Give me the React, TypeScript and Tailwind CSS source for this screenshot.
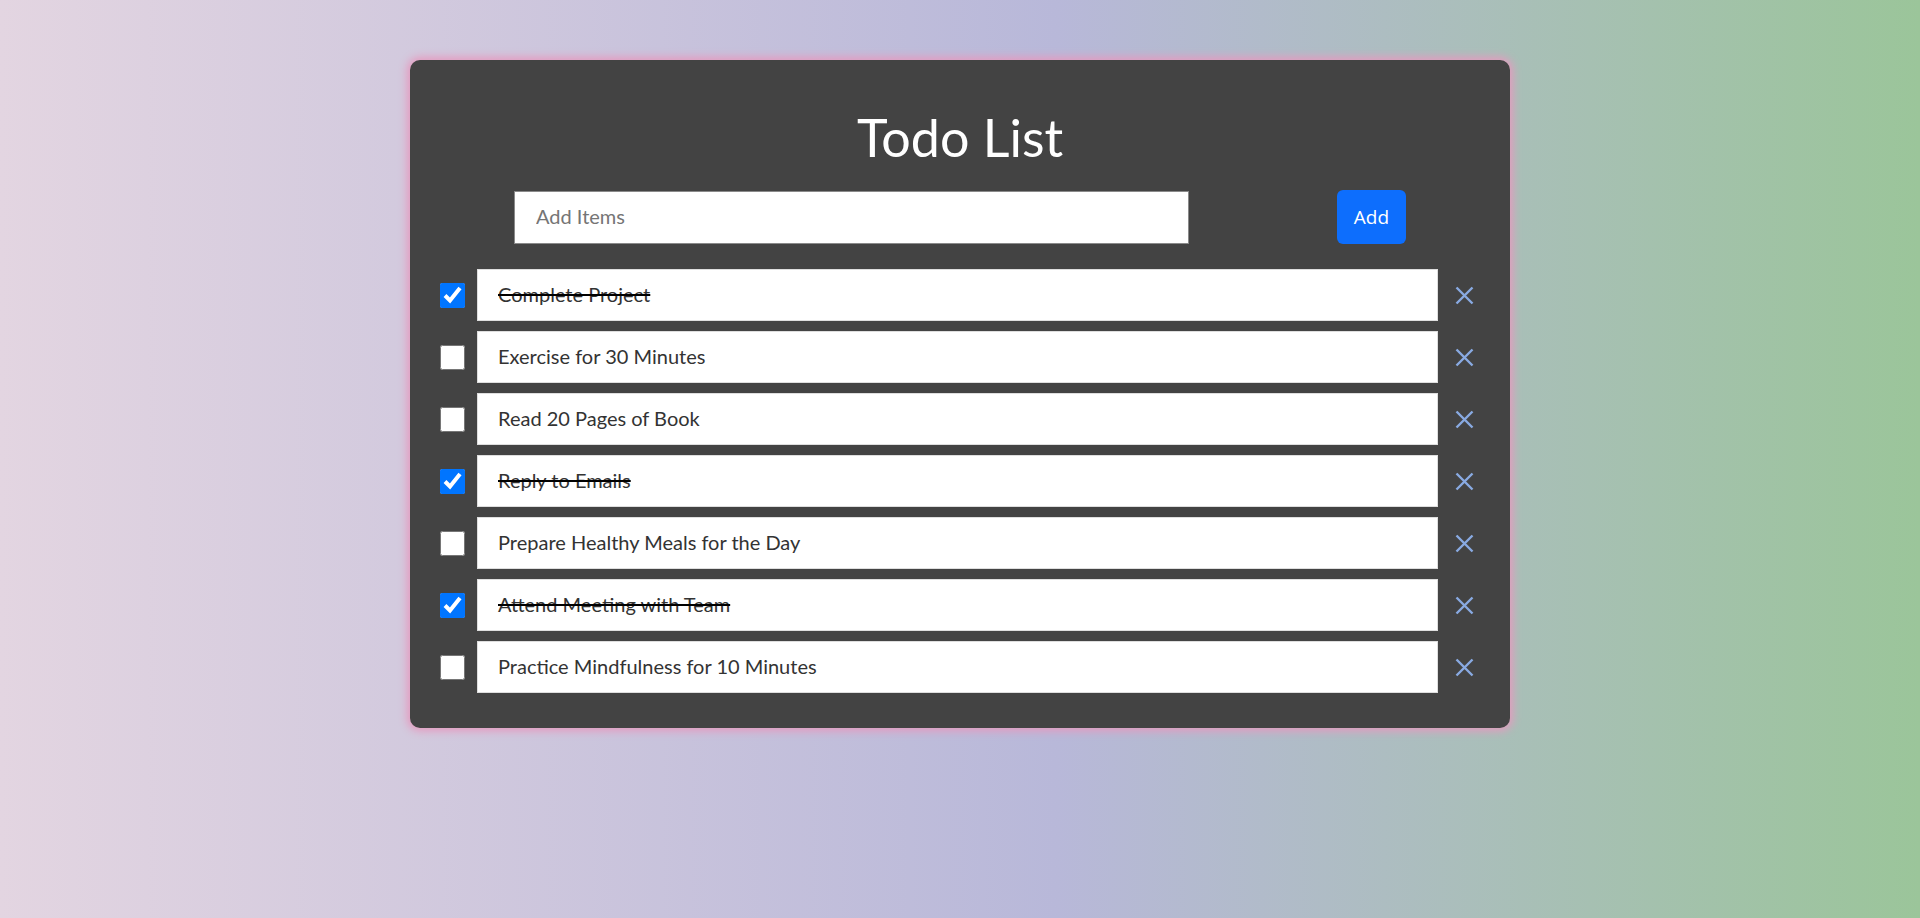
import { useState } from "react";

type Todo = { id: number; text: string; done: boolean };

const initialTodos: Todo[] = [
  { id: 1, text: "Complete Project", done: true },
  { id: 2, text: "Exercise for 30 Minutes", done: false },
  { id: 3, text: "Read 20 Pages of Book", done: false },
  { id: 4, text: "Reply to Emails", done: true },
  { id: 5, text: "Prepare Healthy Meals for the Day", done: false },
  { id: 6, text: "Attend Meeting with Team", done: true },
  { id: 7, text: "Practice Mindfulness for 10 Minutes", done: false },
];

function CloseIcon() {
  return (
    <svg width="19" height="19" viewBox="0 0 19 19" fill="none">
      <path d="M1.5 1.5 L17.5 17.5 M17.5 1.5 L1.5 17.5" stroke="#89aae2" strokeWidth="2.4" />
    </svg>
  );
}

export default function App() {
  const [todos, setTodos] = useState<Todo[]>(initialTodos);
  const [item, setItem] = useState("");

  const toggle = (id: number) =>
    setTodos(todos.map((t) => (t.id === id ? { ...t, done: !t.done } : t)));

  const remove = (id: number) => setTodos(todos.filter((t) => t.id !== id));

  const add = () => {
    if (!item.trim()) return;
    setTodos([...todos, { id: Date.now(), text: item, done: false }]);
    setItem("");
  };

  return (
    <div className="min-h-[918px] w-full bg-[linear-gradient(to_right,#e3d5e1,#b8b8d9_55%,#9bc59a)] pt-[60px] font-['Lato',sans-serif]">
      <div className="mx-auto w-[1100px] rounded-[10px] bg-[#434343] px-[30px] pt-[47px] pb-[35px] shadow-[0_0_8px_3px_#e59bbf]">
        <h1 className="text-center text-[52px] leading-[60px] text-white">Todo List</h1>

        <div className="mt-[23px] flex items-center justify-center gap-[148px]">
          <input
            value={item}
            onChange={(e) => setItem(e.target.value)}
            placeholder="Add Items"
            className="h-[53px] w-[675px] border border-[#8a8a8a] bg-white px-[21px] pb-[2px] text-[20px] text-[#333] outline-none placeholder:text-[#757575]"
          />
          <button
            onClick={add}
            className="h-[54px] w-[69px] rounded-[6px] bg-[#0d6efd] text-[19px] text-white font-['Open_Sans',sans-serif]"
          >
            Add
          </button>
        </div>

        <ul className="mt-[25px] flex flex-col gap-[10px]">
          {todos.map((t) => (
            <li key={t.id} className="flex items-center">
              <input
                type="checkbox"
                checked={t.done}
                onChange={() => toggle(t.id)}
                className="h-[25px] w-[25px] shrink-0 accent-[#0075ff]"
              />
              <div className="ml-[12px] flex h-[52px] w-[961px] items-center border border-[#dedede] bg-white px-[20px] pb-[3px]">
                <span className={`text-[20px] text-[#333] ${t.done ? "line-through decoration-black" : ""}`}>
                  {t.text}
                </span>
              </div>
              <button onClick={() => remove(t.id)} className="ml-[17px] flex items-center">
                <CloseIcon />
              </button>
            </li>
          ))}
        </ul>
      </div>
    </div>
  );
}
